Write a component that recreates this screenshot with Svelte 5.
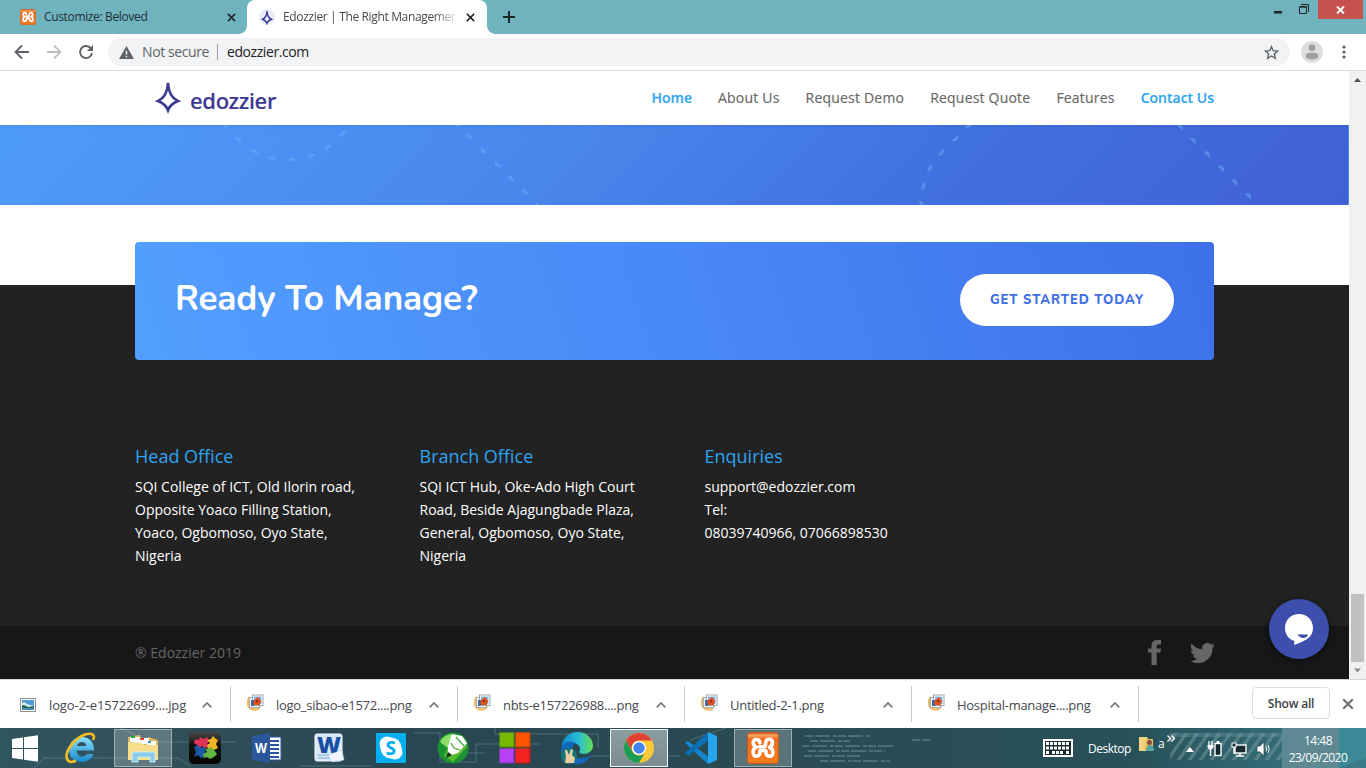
<script>
  const nav = [
    { label: 'Home', active: true },
    { label: 'About Us' },
    { label: 'Request Demo' },
    { label: 'Request Quote' },
    { label: 'Features' },
    { label: 'Contact Us', active: true }
  ];

  const offices = [
    { title: 'Head Office', lines: ['SQI College of ICT, Old Ilorin road,', 'Opposite Yoaco Filling Station,', 'Yoaco, Ogbomoso, Oyo State,', 'Nigeria'] },
    { title: 'Branch Office', lines: ['SQI ICT Hub, Oke-Ado High Court', 'Road, Beside Ajagungbade Plaza,', 'General, Ogbomoso, Oyo State,', 'Nigeria'] },
    { title: 'Enquiries', lines: ['support@edozzier.com', 'Tel:', '08039740966, 07066898530'] }
  ];

  const downloads = ['logo-2-e15722699....jpg', 'logo_sibao-e1572....png', 'nbts-e157226988....png', 'Untitled-2-1.png', 'Hospital-manage....png'];

  // x, y and rotation of each dash on the banner's decorative curves
  const dashes = [
    [225.5, 1, 50], [238.7, 14.3, 42], [254.7, 26, 28], [272.3, 32.7, 10], [291.7, 34, 0], [310.7, 30.3, -20], [328, 21.7, -32], [342.3, 8.3, -45],
    [456, -1, 225], [469, 11.7, 225], [483, 26, 225], [497, 39.7, 225], [511, 53.7, 225], [524.7, 67.3, 225], [538, 81, 225],
    [969.3, 1, 145], [956, 14, 135], [941.7, 28, 130], [930.3, 43.3, 120], [923.7, 61, 100], [922, 79, 65],
    [1180.3, 1, 45], [1193.7, 15, 45], [1207.7, 28.7, 45], [1221.7, 42.7, 45], [1235.3, 56.7, 45], [1249, 70.3, 45]
  ];
</script>

{#snippet xampp(size)}
  <svg width={size} height={size} viewBox="0 0 32 32">
    <defs><linearGradient id="xg" x2="0" y2="1"><stop offset="0" stop-color="#c85a1c" /><stop offset=".1" stop-color="#f9a566" /><stop offset=".2" stop-color="#ee6d1d" /><stop offset="1" stop-color="#f47b20" /></linearGradient></defs>
    <rect x=".5" y=".5" width="31" height="31" rx="3" fill="url(#xg)" stroke="#c65a14" />
    <path d="M12.800 11C12.800 6.500 6.200 6.300 6.200 10.500C6.200 12.800 7.500 14.300 9.500 15.300C5 16.500 5 24.300 9.500 24.300C12.800 24.300 13 21.500 13 18.500H18.800C18.800 21.500 19.500 24.300 22.500 24.300C27 24.300 27 17 22.500 15.300C26.500 13.300 26.500 7.200 22 7.200C18.800 7.200 18.500 10 18.500 12.500C18.500 14 17.500 14.700 16 14.700H12.500" fill="none" stroke="#fff" stroke-width="3.600" stroke-linejoin="round" stroke-linecap="round" />
  </svg>
{/snippet}

{#snippet star(w, h, sw)}
  <svg width={w} height={h} viewBox="0 0 24 34">
    <path d="M12 4.500C11.700 12.500 8.500 19 2.500 21.800C7.500 23.700 10.500 26.500 12 30.500C13.500 26.500 16.500 23.700 21.500 21.800C15.500 19 12.300 12.500 12 4.500Z" fill="none" stroke="#3b3991" stroke-width={sw} stroke-miterlimit="8" />
  </svg>
{/snippet}

{#snippet close(size)}
  <svg width={size} height={size} viewBox="0 0 10 10"><path d="M1 1L9 9M9 1L1 9" fill="none" stroke="currentColor" stroke-width="1.700" /></svg>
{/snippet}

<div class="screen">
  <header class="tabs">
    <div class="tab idle">
      {@render xampp(16)}
      <span class="tab-title">Customize: Beloved</span>
      {@render close(9)}
    </div>
    <div class="tab current">
      <span class="favicon">{@render star(12, 16, 3)}</span>
      <span class="tab-title fade">Edozzier | The Right Managemen</span>
      {@render close(9)}
    </div>
    <svg class="plus" width="12" height="12" viewBox="0 0 12 12"><path d="M6 0V12M0 6H12" stroke="#1d2426" stroke-width="2" /></svg>
    <div class="window">
      <svg width="8" height="3"><rect width="8" height="2.500" fill="#202628" /></svg>
      <svg class="restore" width="10" height="10" viewBox="0 0 10 10"><path d="M.5 2.500H7.500V9.500H.5ZM.5 3.200H7.500M2 .5H9.500V8" fill="none" stroke="#202628" /></svg>
      <span class="shut"><svg width="9" height="8" viewBox="0 0 9 8"><path d="M1 .5L8 7.500M8 .5L1 7.500" stroke="#fff" stroke-width="1.900" /></svg></span>
    </div>
  </header>

  <div class="toolbar">
    <svg width="16" height="16" viewBox="0 0 16 16"><path d="M15 8H2M8 1.500L1.500 8L8 14.500" fill="none" stroke="#5f6368" stroke-width="1.800" /></svg>
    <svg width="16" height="16" viewBox="0 0 16 16"><path d="M1 8H14M8 1.500L14.500 8L8 14.500" fill="none" stroke="#bcbec1" stroke-width="1.800" /></svg>
    <svg width="16" height="16" viewBox="0 0 16 16"><path d="M14 9A6 6 0 1 1 12.500 4L14 5.500" fill="none" stroke="#5f6368" stroke-width="1.900" /><path d="M15 1V7H9Z" fill="#5f6368" /></svg>
    <div class="address">
      <svg width="15" height="13" viewBox="0 0 15 13"><path d="M7.500 0L15 13H0Z" fill="#5f6368" /><path d="M7.500 5V8.500M7.500 9.800V11.300" stroke="#f1f3f4" stroke-width="1.500" /></svg>
      <span class="insecure">Not secure</span>
      <i></i>
      <span class="url">edozzier.com</span>
      <svg class="fav" width="15" height="15" viewBox="0 0 15 15"><path d="M7.500 1.700L9.200 5.700L13.600 6.100L10.300 9L11.300 13.300L7.500 11L3.700 13.300L4.700 9L1.400 6.100L5.800 5.700Z" fill="none" stroke="#5f6368" stroke-width="1.400" /></svg>
    </div>
    <svg class="avatar" width="22" height="22" viewBox="0 0 22 22"><circle cx="11" cy="11" r="11" fill="#dedede" /><circle cx="11" cy="6.700" r="3.300" fill="#a0a0a0" /><ellipse cx="11" cy="15" rx="6.500" ry="3.600" fill="#a0a0a0" /></svg>
    <svg width="4" height="14" viewBox="0 0 4 14" fill="#5f6368"><circle cx="2" cy="2" r="1.600" /><circle cx="2" cy="7" r="1.600" /><circle cx="2" cy="12" r="1.600" /></svg>
  </div>

  <div class="viewport">
    <main>
      <div class="site-head">
        <div class="brand">{@render star(26, 36, 2.5)}<span>edozzier</span></div>
        <nav>
          {#each nav as item}<a class:active={item.active}>{item.label}</a>{/each}
        </nav>
      </div>
      <div class="banner">
        <svg width="1349" height="80">
          {#each dashes as [x, y, r]}
            <path d="M-4 1.800C-3.500 -2.600 3.500 -2.600 4 1.800Z" transform="translate({x} {y}) rotate({r})" fill="#6cb2f7" fill-opacity=".5" />
          {/each}
        </svg>
      </div>
      <div class="gap"></div>
      <footer>
        <div class="cta">
          <h2>Ready To Manage?</h2>
          <button>GET STARTED TODAY</button>
        </div>
        <div class="offices">
          {#each offices as office}
            <section>
              <h4>{office.title}</h4>
              {#each office.lines as line}<p>{line}</p>{/each}
            </section>
          {/each}
        </div>
        <div class="legal">
          <span>® Edozzier 2019</span>
          <div class="social">
            <svg width="14" height="25" viewBox="0 0 14 25"><path d="M13 0V4.500H10.500C9 4.500 8.700 5.200 8.700 6.500V8.500H13L12.500 12.500H8.700V25H3.500V12.500H0V8.500H3.500V6C3.500 2 5.700 0 9 0Z" fill="#666" /></svg>
            <svg width="25" height="21" viewBox="0 1.500 24 20"><path d="M24 4.600a10 10 0 0 1-2.800.8 5 5 0 0 0 2.100-2.700 10 10 0 0 1-3.100 1.200 4.900 4.900 0 0 0-8.400 4.500A14 14 0 0 1 1.700 3.200a4.900 4.900 0 0 0 1.500 6.500 5 5 0 0 1-2.200-.6 4.900 4.900 0 0 0 3.900 4.900 5 5 0 0 1-2.200.1 4.900 4.900 0 0 0 4.600 3.400A10 10 0 0 1 0 19.500a14 14 0 0 0 21.500-12.400A10 10 0 0 0 24 4.600Z" fill="#666" /></svg>
          </div>
        </div>
      </footer>
      <div class="chat">
        <svg width="28" height="31" viewBox="0 0 28 31"><path d="M14 0C22 0 28 6 28 14C28 22 22.500 26.500 9 31L9.500 27C4 25.500 0 20.500 0 14C0 6 6 0 14 0Z" fill="#fff" /><path d="M12.500 20.500H23C22 25 15 25 12.500 20.500Z" fill="#3d4eac" /></svg>
      </div>
    </main>
    <aside class="scroll">
      <svg width="17" height="17"><path d="M5 11L8.500 7L12 11Z" fill="#505050" /></svg>
      <span class="thumb"></span>
      <svg width="17" height="17"><path d="M5 6.500L8.500 10.500L12 6.500Z" fill="#8c8c8c" /></svg>
    </aside>
  </div>

  <div class="shelf">
    {#each downloads as name, i}
      <div class="file">
        {#if i === 0}
          <svg width="16" height="14" viewBox="0 0 16 14"><rect x=".5" y=".5" width="15" height="13" fill="#fff" stroke="#8b9197" /><path d="M2 2H14V9H2Z" fill="#4d9bd8" /><path d="M2 5Q5 3 7 6L14 8V10H2Z" fill="#d6edf5" /><path d="M2 7Q6 7 8 9L14 8V10H2Z" fill="#276c52" /><path d="M2 10H14V12H2Z" fill="#4a8bb5" /></svg>
        {:else}
          <svg class="png" width="17" height="17" viewBox="0 0 17 17"><path d="M3 3C-1 8 1 15 7 15.500C10 16 12 14 13 12" fill="none" stroke="#f0bd66" stroke-width="2.500" /><rect x="2.500" y="3.500" width="10" height="10" fill="#f7f9fa" stroke="#a0acb6" /><rect x="5.500" y="1" width="10.500" height="10.500" fill="#fff" stroke="#9aa6b0" /><path d="M7 2.500H14.500V10H7Z" fill="#80b9ec" /><path d="M4 6H7V12H4Z" fill="#3f69a7" /><path d="M6.500 9C6 6 8 5 9 5C10 2 13 3 12.500 5.500C15 6 14 8.500 13 9.500V11H7Z" fill="#e05119" /><path d="M9 6H11V8H9Z" fill="#8e2a1a" /></svg>
        {/if}
        <span>{name}</span>
        <svg width="10" height="6" viewBox="0 0 10 6"><path d="M.7 5.300L5 1L9.300 5.300" fill="none" stroke="#75787b" stroke-width="1.700" /></svg>
      </div>
    {/each}
    <button class="all">Show all</button>
    <span class="dismiss">{@render close(12)}</span>
  </div>

  <div class="taskbar">
    <svg class="circuit" width="1366" height="40">
      <defs>
        <linearGradient id="tb" x1="0" x2="1"><stop offset="0" stop-color="#2f555e" /><stop offset=".08" stop-color="#32515b" /><stop offset=".3" stop-color="#284750" /><stop offset=".6" stop-color="#2a4b53" /><stop offset=".83" stop-color="#285159" /><stop offset="1" stop-color="#397c89" /></linearGradient>
        <pattern id="stripe" width="11" height="32" patternUnits="userSpaceOnUse" patternTransform="skewX(-35)"><rect width="4" height="32" fill="#7b999d" fill-opacity=".5" /></pattern>
        <filter id="soft"><feGaussianBlur stdDeviation=".6" /></filter>
      </defs>
      <rect width="1366" height="40" fill="url(#tb)" />
      <g fill="none" stroke="#6a949c" stroke-opacity=".5" filter="url(#soft)">
        <path d="M34 40L44 30H178L190 38M120 0L150 14H236M300 38H372M414 5H440V34H476V16H540M495 0V6H598V20M590 28H680M726 0L690 12M455 25H485" />
        <path d="M805 8H870M810 13H850M802 18H895M808 23H885M804 28H860M820 33H890M912 12H930" stroke-dasharray="8 2 15 3 4 1" stroke-width="2" />
      </g>
      <rect x="1170" y="5" width="112" height="4" fill="#5e8992" fill-opacity=".5" />
      <rect x="1170" y="5" width="112" height="27" fill="url(#stripe)" />
      <rect x="1282" width="57" height="40" fill="#5e8992" />
      <path d="M1339 0H1366V30L1339 40Z" fill="#3b8997" />
    </svg>
    <div class="apps">
      <span class="start"><svg width="26" height="27" viewBox="0 0 26 27"><path d="M0 4L11 2.500V13H0ZM12 2.300L26 .3V13H12ZM0 14H11V24.500L0 23ZM12 14H26V26.700L12 24.700Z" fill="#fff" /></svg></span>
      <span class="app"><svg width="32" height="32" viewBox="0 0 32 32"><defs><linearGradient id="ie" x2="0" y2="1"><stop stop-color="#8be2fa" /><stop offset="1" stop-color="#1688cd" /></linearGradient></defs><path d="M29 18.500H11.500C12 25.500 20 26 22 22H28.500C26 28 21 30 17 30C8 30 4 24 4 18C4 11 9 5 17 5C25 5 29.500 11 29 18.500ZM12 14H21.500C21 9 13 8.500 12 14Z" fill="url(#ie)" /><path d="M28 8C31 2.500 26 .5 20 2.500C11 5.500 1 17 1.500 25C2 31 7 30.500 11 28.500" fill="none" stroke="#f5bd23" stroke-width="2.600" /></svg></span>
      <span class="app open"><svg width="32" height="28" viewBox="0 0 32 28"><path d="M1 3L13 1L14 4H20L21 3L31 6V24H1Z" fill="#dcb65f" /><path d="M3 3H13V9H3Z" fill="#fff" /><path d="M4 2H8V4H4Z" fill="#1dac43" /><path d="M12 4H22V10H12Z" fill="#fff" /><path d="M13 4H17V6H13Z" fill="#dc3b2f" /><path d="M20 7H29V11H20Z" fill="#fff" /><path d="M21 7H24V9H21Z" fill="#2d91e4" /><path d="M1 8L14 9L17 11H31V26H1Z" fill="#f7dd8c" /><path d="M5 28V20Q5 18 7 18H26Q28 18 28 20V28H23V23H11V28Z" fill="#89caeb" stroke="#c8eefb" /></svg></span>
      <span class="app"><svg width="32" height="32" viewBox="0 0 32 32"><defs><linearGradient id="pz" x2="0" y2="1"><stop stop-color="#4a4a4a" /><stop offset=".4" stop-color="#111" /><stop offset="1" stop-color="#050505" /></linearGradient></defs><rect width="32" height="32" rx="5" fill="url(#pz)" />
        <path d="M6 7L10 8L11 5L15 7L18 5L20 9L18 12L20 15L16 16L13 14L10 17L8 13L5 11Z" fill="#df3558" /><path d="M18 8L22 7L24 4L27 7L29 8L27 12L29 16L25 18L22 16L19 17L18 13L21 11Z" fill="#f0b325" /><path d="M5 15L9 13L11 16L15 15L17 19L15 22L16 25L12 26L9 23L5 25L7 20Z" fill="#1959a7" /><path d="M16 16L19 17L22 15L25 18L28 22L25 25L21 27L18 25L15 26L14 22L18 20Z" fill="#61b642" /></svg></span>
      <span class="app"><svg width="30" height="30" viewBox="0 0 30 30"><path d="M16 4H29V27H16Z" fill="#fff" stroke="#2b579a" /><path d="M17 8H27M17 12H27M17 16H27M17 20H27M17 24H27" stroke="#2b579a" stroke-width="1.800" /><path d="M0 3L18 0V30L0 27Z" fill="#2b579a" /><text x="3" y="20" font-size="14" font-weight="700" fill="#fff" font-family="Open Sans, sans-serif" textLength="12" lengthAdjust="spacingAndGlyphs">W</text></svg></span>
      <span class="app up"><svg width="30" height="30" viewBox="0 0 30 30"><rect x="1" y="1" width="27" height="27" rx="2" fill="#d8e8f8" stroke="#f7fbff" /><path d="M4 22H23M4 25H20" stroke="#7fa8d1" /><text x="3" y="20" font-size="23" font-weight="800" fill="#1750a2" font-family="Open Sans, sans-serif" textLength="24" lengthAdjust="spacingAndGlyphs">W</text><path d="M14 22L28 17L30 27L18 29Z" fill="#eef5fc" stroke="#aec6df" stroke-width=".5" /></svg></span>
      <span class="app"><svg width="30" height="30" viewBox="0 0 30 30"><rect width="30" height="30" fill="#00aff0" /><circle cx="11" cy="11" r="7.500" fill="#fff" /><circle cx="19" cy="19" r="7.500" fill="#fff" /><circle cx="15" cy="15" r="10.500" fill="#fff" /><text x="9.500" y="22" font-size="19" font-weight="700" fill="#00aff0" font-family="Open Sans, sans-serif">S</text></svg></span>
      <span class="app"><svg width="32" height="32" viewBox="0 0 32 32"><circle cx="16" cy="16" r="15.500" fill="#1c9332" /><path d="M3 10A15 15 0 0 1 16 2L12 17Z" fill="#8ae063" /><path d="M16 3Q29 4 30 15L16 30L7 24Z" fill="#54bc2e" /><path d="M15 2L25 4L30 11L21 21L11 24L11 14Z" fill="#fff" /><path d="M14 11L17 16L23 18M19 5L27 14" fill="none" stroke="#49a938" stroke-width="1.300" /><path d="M9 26L11 20L15 23Z" fill="#102d12" /></svg></span>
      <span class="app"><svg width="32" height="32" viewBox="0 0 32 32"><path d="M.5.5H15.500V15.500H.5Z" fill="#76b900" /><path d="M16.500.5H31.500V15.500H16.500Z" fill="#ff5400" /><path d="M.5 16.500H15.500V31.500H.5Z" fill="#b640f3" /><path d="M16.500 16.500H31.500V31.500H16.500Z" fill="#f52222" /><path d="M1 15H15V1M17 15H31V1M1 31H15V17M17 31H31V17" fill="none" stroke="#000" stroke-opacity=".3" /></svg></span>
      <span class="app"><svg width="32" height="32" viewBox="0 0 32 32"><defs><linearGradient id="ed"><stop stop-color="#1386d1" /><stop offset=".55" stop-color="#27bdd5" /><stop offset="1" stop-color="#68df55" /></linearGradient></defs><path d="M0 16C2 4 9 0 17 0C26 0 32 7 32 14C32 22 20 24 18 20C21 17 18 11 12 11C6 10 1 12 0 16Z" fill="url(#ed)" /><path d="M0 16C2 9 10 8 15 11C9 13 11 24 18 26C23 27 27 25 30 23C26 31 18 34 10 31C4 29 0 23 0 16Z" fill="#1268b9" /><circle cx="8" cy="24" r="8" fill="#18776f" /><path d="M4 31L5 25L4 18L6 18L8 23L10 17L12 18L11 23L14 26L13 31Z" fill="#ebcda7" /></svg></span>
      <span class="app focus"><svg width="30" height="30" viewBox="0 0 30 30"><circle cx="15" cy="15" r="15" fill="#fbc934" /><path d="M2 7.500A15 15 0 0 1 28 7.500H15A7.500 7.500 0 0 0 8.500 18.750Z" fill="#e04335" /><path d="M2 7.500A15 15 0 0 0 15 30L21.500 18.750A7.500 7.500 0 0 1 8.500 18.750Z" fill="#1d9c55" /><circle cx="15" cy="15" r="7" fill="#fff" /><circle cx="15" cy="15" r="5.700" fill="#4484ee" /></svg></span>
      <span class="app"><svg width="32" height="32" viewBox="0 0 32 32"><path d="M0 11L3 9L25 26L23 32Z" fill="#1685cd" /><path d="M23 0L0 21L3 24L24 8Z" fill="#0d6eb2" /><path d="M23 0L32 4V28L23 32Z" fill="#29a5ef" /></svg></span>
      <span class="app open">{@render xampp(32)}</span>
    </div>
    <div class="tray">
      <svg width="30" height="18" viewBox="0 0 30 18"><rect x="1" y="1" width="28" height="16" fill="#172b30" stroke="#fff" stroke-width="2" /><path d="M3 4.500H27M3 9H27M3 13.500H7M9 13.500H21M23 13.500H27" stroke="#fff" stroke-width="3" stroke-dasharray="3 1" /></svg>
      <span class="desk">Desktop</span>
      <svg class="folder" width="16" height="17" viewBox="0 0 16 17"><path d="M0 1H8L9 3V15H0Z" fill="#f1d580" /><path d="M7 3H14V14H5Z" fill="#e5bf5d" /><circle cx="10.500" cy="6.500" r="2.500" fill="#83513a" /><path d="M7 15Q7 9 11 9Q15 9 15 15Z" fill="#55a79f" /></svg>
      <span class="letter">a</span>
      <svg class="more" width="9" height="7" viewBox="0 0 9 7"><path d="M.5.5L3.500 3.500L.5 6.500M4.500.5L7.500 3.500L4.500 6.500" fill="none" stroke="#fff" stroke-width="1.400" /></svg>
      <svg class="caret" width="8" height="5"><path d="M0 5L4 0L8 5Z" fill="#fff" /></svg>
      <svg class="plug" width="16" height="16" viewBox="0 0 16 16"><rect x="8" y="2.500" width="6" height="12" fill="#13282d" stroke="#fff" stroke-width="1.400" /><path d="M9.500 1H12.500" stroke="#fff" stroke-width="2" /><path d="M2 0V4M5 0V4M3.500 8V15" stroke="#fff" stroke-width="1.300" /><path d="M.5 4H6.500V6L5 8.500H2L.5 6Z" fill="#fff" /></svg>
      <svg class="net" width="16" height="15" viewBox="0 0 16 15"><rect x="4" y="3" width="11" height="8" fill="#162c32" stroke="#fff" stroke-width="1.400" /><path d="M9 11V14M5 14H13M3 4V12" stroke="#fff" stroke-width="1.400" /><rect x="1" y="1" width="4" height="4" fill="#193239" stroke="#fff" /></svg>
      <svg class="sound" width="13" height="14" viewBox="0 0 13 14"><path d="M0 4H3L7 0V14L3 10H0Z" fill="#fff" stroke="#1d363d" stroke-width=".7" /><path d="M9 4.500Q10.500 7 9 9.500M11 3Q13.500 7 11 11" fill="none" stroke="#fff" /></svg>
      <div class="clock"><span>14:48</span><span>23/09/2020</span></div>
    </div>
  </div>
</div>

<style>
  :global(body) { margin: 0; overflow: hidden; }
  * { box-sizing: border-box; }
  svg { flex: none; display: block; }
  button { border: 0; padding: 0; font-family: inherit; }
  .screen { width: 1366px; height: 768px; display: flex; flex-direction: column; overflow: hidden; font-family: 'Open Sans', sans-serif; background: #fff; white-space: nowrap; }

  .tabs { height: 34px; background: #6fb3bf; display: flex; flex: none; }
  .tab { height: 34px; display: flex; align-items: center; font-size: 12px; color: #1f2f33; }
  .idle { width: 247px; padding: 0 11px 0 20px; }
  .current { position: relative; width: 240px; background: #fff; border-radius: 8px 8px 0 0; padding: 0 12px; color: #45494d; }
  .current::before, .current::after { content: ''; position: absolute; bottom: 0; width: 8px; height: 8px; }
  .current::before { left: -8px; background: radial-gradient(circle at 0 0, transparent 7.5px, #fff 8px); }
  .current::after { right: -8px; background: radial-gradient(circle at 100% 0, transparent 7.5px, #fff 8px); }
  .tab-title { margin-left: 8px; flex: 1; min-width: 0; letter-spacing: -.35px; position: relative; top: -1px; }
  .idle :global(svg:last-child), .current > :global(svg:last-child) { margin-left: 10px; color: #1d2426; }
  .favicon { width: 16px; height: 16px; border-radius: 8px; background: #e7edf8; display: flex; justify-content: center; align-items: center; flex: none; }
  .fade { -webkit-mask-image: linear-gradient(90deg, #000 87%, transparent 102%); mask-image: linear-gradient(90deg, #000 87%, transparent 102%); }
  .plus { margin: 11px 0 0 16px; }
  .window { margin-left: auto; display: flex; align-items: flex-start; padding-right: 3px; }
  .window > svg:first-child { margin: 11px 17px 0 0; }
  .restore { margin: 4px 9px 0 0; }
  .shut { width: 45px; height: 19px; background: #c75050; display: grid; place-items: center; }

  .toolbar { height: 37px; flex: none; border-bottom: 1px solid #dadce0; display: flex; align-items: center; padding: 0 20px 0 14px; gap: 16px; }
  .address { height: 28px; flex: 1; margin-left: -2px; border-radius: 14px; background: #f1f3f4; display: flex; align-items: center; padding: 0 11px; font-size: 14px; }
  .insecure { margin-left: 8px; color: #5f6368; letter-spacing: -.4px; position: relative; top: -1px; }
  .address i { width: 1px; height: 16px; margin: 0 9px 0 8px; background: #9aa0a6; }
  .url { color: #202124; letter-spacing: -.42px; position: relative; top: -1px; }
  .fav { margin-left: auto; }
  .avatar { margin: 0 3px 0 -5px; }

  .viewport { display: flex; height: 608px; flex: none; }
  main { width: 1349px; position: relative; display: flex; flex-direction: column; }
  .scroll { width: 17px; background: #f1f1f1; display: flex; flex-direction: column; }
  .thumb { width: 13px; height: 68px; margin: auto 2px 0; background: #c1c1c1; }
  .site-head { height: 54px; flex: none; display: flex; justify-content: space-between; padding: 0 135px 0 155px; }
  .brand { display: flex; align-items: center; color: #3b3991; font: 500 22px/30px 'Noto Sans', sans-serif; -webkit-text-stroke: .2px #3b3991; }
  .brand span { margin: 4px 0 0 9px; letter-spacing: -.3px; }
  .brand > :global(svg) { margin-top: -4px; }
  nav { display: flex; gap: 26px; font-size: 14px; font-weight: 500; letter-spacing: .2px; color: #666; -webkit-text-stroke: .15px currentColor; line-height: 54px; }
  .active { color: #2ea3f2; font-weight: 600; letter-spacing: 0; }
  .banner { height: 80px; flex: none; background: linear-gradient(rgba(15,40,90,.07), transparent 5px), linear-gradient(135deg, #4f9cfc 0%, #4a87ed 40%, #4172df 68%, #4160d6 100%); border-right: 1px solid #4f86ea; }
  .gap { height: 80px; flex: none; }
  footer { height: 394px; background: #222; display: flex; flex-direction: column; }
  .cta { width: 1079px; height: 118px; flex: none; margin: -43px 0 0 135px; border-radius: 4px; background: linear-gradient(72deg, #529fff 0%, #4887f5 55%, #3d71e9 100%); padding: 32px 40px 0; display: flex; justify-content: space-between; }
  h2 { margin: 1px 0 0; color: #fff; font: 700 35px/48px Nunito, Lato, sans-serif; letter-spacing: -.1px; }
  .cta button { width: 214px; height: 52px; border-radius: 26px; color: #3f6fe5; background: #fff; font: 800 13px/52px Nunito, 'Open Sans', sans-serif; letter-spacing: .95px; }
  .offices { display: grid; grid-template-columns: 284.5px 285px 300px; padding: 83px 0 0 135px; color: #fff; }
  h4 { margin: 0 0 6px; font-weight: 400; font-size: 18px; line-height: 26px; color: #2ea3f2; }
  p { margin: 0; font-size: 14px; line-height: 23px; }
  .legal { margin-top: auto; height: 53px; background: #171717; padding: 0 134px 0 135px; display: flex; align-items: center; justify-content: space-between; font-size: 14px; color: #666; }
  .social { display: flex; gap: 28px; align-items: center; }
  .chat { position: absolute; left: 1269px; top: 528px; width: 60px; height: 60px; border-radius: 50%; background: #3d4eac; display: grid; place-items: center; box-shadow: 0 1px 6px #0008; }

  .shelf { height: 49px; flex: none; border-top: 1px solid #d5d5d7; display: flex; align-items: center; font-size: 13px; color: #45494e; }
  .file { width: 227px; height: 36px; display: flex; align-items: center; border-right: 1px solid #c9c9c9; padding: 2px 18px 0 16px; }
  .file:first-child { width: 231px; padding-left: 20px; }
  .file span { margin-left: 12px; flex: 1; letter-spacing: -.28px; }
  .file:first-child span { margin-left: 13px; letter-spacing: -.15px; }
  .png { margin: -5px 0 0; }
  .all { margin-left: auto; width: 78px; height: 32px; border: 1px solid #dadce0; border-radius: 4px; background: #fff; color: #3c4043; font-size: 12px; font-weight: 600; letter-spacing: -.2px; margin-top: -2px; }
  .dismiss { color: #6c7073; margin: 0 12px 0 12px; }

  .taskbar { position: relative; height: 40px; flex: none; display: flex; justify-content: space-between; }
  .circuit { position: absolute; inset: 0; }
  .apps { position: relative; display: flex; gap: 4px; height: 40px; align-items: center; }
  .start, .app { width: 58px; height: 38px; display: grid; place-items: center; }
  .app svg { overflow: visible; }
  .start { width: 48px; padding-left: 2px; }
  .open { background: #ffffff3b; border: 1px solid #ffffff69; }
  .focus { background: linear-gradient(#8a9da0, #7c8c90); border: 1px solid #f3f8f9; }
  .tray { position: relative; width: 323px; display: flex; align-items: center; color: #fff; font-size: 12px; }
  .desk { margin-left: 15px; width: 46px; letter-spacing: -.5px; }
  .folder { margin: -8px 0 0 5px; }
  .letter { width: 6px; margin: -9px 0 0 3px; font-size: 12px; }
  .more { margin: -20px 0 0 3px; }
  .caret { margin: 3px 0 0 10px; }
  .plug { margin: 2px 0 0 13px; }
  .net { margin: 2px 0 0 8px; }
  .sound { margin: 2px 0 0 10px; }
  .clock { width: 72px; margin-left: auto; margin-right: 12px; display: flex; flex-direction: column; align-items: center; line-height: 17px; letter-spacing: -.5px; padding-top: 1px; }
</style>
